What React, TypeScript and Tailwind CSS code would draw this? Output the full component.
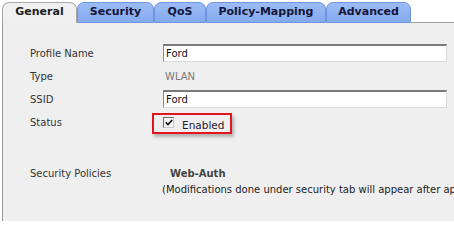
const tabs = [
  { label: 'General', w: 'w-[75px]', active: true },
  { label: 'Security', w: 'w-[77px]', active: false },
  { label: 'QoS', w: 'w-[52px]', active: false },
  { label: 'Policy-Mapping', w: 'w-[120px]', active: false },
  { label: 'Advanced', w: 'w-[85px]', active: false },
];

const font = { fontFamily: '"DejaVu Sans", Verdana, sans-serif' };

function TextBox({ value }: { value: string }) {
  return (
    <div className="h-[18px] w-[284px] bg-white border-t-2 border-l border-t-[#7a7a7a] border-l-[#8a8a8a] border-r border-b border-r-[#dcdcdc] border-b-[#dcdcdc] pl-[2px] text-[10px] leading-[15px] text-[#111]">
      {value}
    </div>
  );
}

export default function App() {
  return (
    <div className="w-[454px] h-[221px] bg-white overflow-hidden" style={font}>
      <div className="flex items-end h-[23px] pl-[2px]">
        {tabs.map((t) =>
          t.active ? (
            <div
              key={t.label}
              className={`${t.w} h-[21px] shrink-0 rounded-t-[7px] border border-b-0 border-[#a8a8a8] bg-[#f0f0f0] text-[11px] font-bold text-[#1e1e1e] flex items-center justify-center pb-[1px]`}
            >
              {t.label}
            </div>
          ) : (
            <div
              key={t.label}
              className={`${t.w} h-[21px] shrink-0 rounded-t-[7px] border border-[#6f95de] bg-gradient-to-b from-[#9bbcf6] to-[#86a9ee] text-[11px] font-bold text-[#15153a] flex items-center justify-center pb-[1px]`}
            >
              {t.label}
            </div>
          )
        )}
        <div className="flex-1 h-[1px] bg-[#a0a0a0] mb-[0px]" />
      </div>
      <div className="h-[198px] bg-[#efefef] border-l border-[#9a9a9a] ml-[2px] pl-[27px] pt-[21px] text-[10px] text-[#333]">
        <div className="flex flex-col gap-y-[5px]">
          <div className="flex items-center h-[18px]">
            <div className="w-[133px]">Profile Name</div>
            <TextBox value="Ford" />
          </div>
          <div className="flex items-center h-[18px]">
            <div className="w-[133px]">Type</div>
            <div className="pl-[2px] text-[#7a7a7a]">WLAN</div>
          </div>
          <div className="flex items-center h-[18px]">
            <div className="w-[133px]">SSID</div>
            <TextBox value="Ford" />
          </div>
          <div className="flex items-center h-[18px]">
            <div className="w-[122px]">Status</div>
            <div className="h-[21px] w-[80px] border-2 border-[#e2141c] shadow-[2px_3px_3px_rgba(0,0,0,0.25)] flex items-start pl-[9px] pt-[2px] mt-[3px]">
              <div className="w-[11px] h-[11px] bg-[#f4f4f4] border border-t-[#6a6a6a] border-l-[#6a6a6a] border-r-[#c8c8c8] border-b-[#c8c8c8] flex items-center justify-center">
                <svg width="8" height="7" viewBox="0 0 8 7">
                  <path d="M0.8 3.4 L3 5.6 L7.2 1" fill="none" stroke="#111" strokeWidth="1.6" />
                </svg>
              </div>
              <div className="ml-[8px] text-[10.5px] leading-[14px] mt-[1px] text-[#2a1a30]">Enabled</div>
            </div>
          </div>
        </div>
        <div className="flex items-center h-[18px] mt-[33px]">
          <div className="w-[140px]">Security Policies</div>
          <div className="font-bold text-[#444]">Web-Auth</div>
        </div>
        <div className="h-[16px] pl-[132px] whitespace-nowrap leading-[16px] text-[#222]">
          (Modifications done under security tab will appear after applying the changes.)
        </div>
      </div>
    </div>
  );
}
